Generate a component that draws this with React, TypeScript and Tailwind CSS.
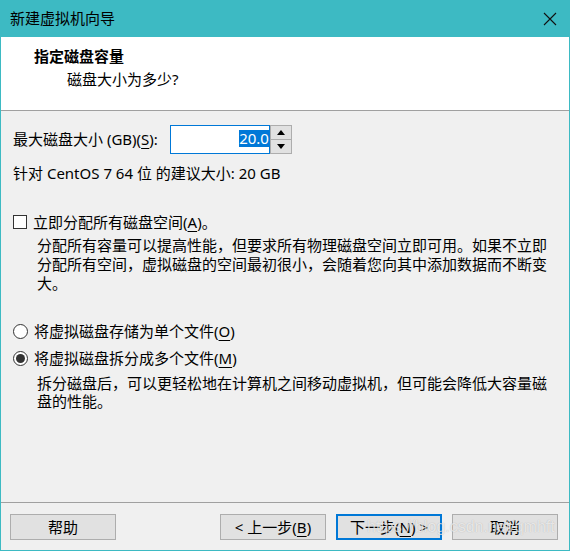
import React from "react";

const Key = ({ k }: { k: string }) => (
  <>
    (<span className="underline underline-offset-[3px] decoration-1">{k}</span>)
  </>
);

const Radio = ({ checked }: { checked?: boolean }) => (
  <span className="w-[15px] h-[15px] rounded-full border border-[#333] bg-white flex items-center justify-center shrink-0">
    {checked && <span className="w-[9px] h-[9px] rounded-full bg-[#333]" />}
  </span>
);

const Btn = ({ children, primary }: { children: React.ReactNode; primary?: boolean }) => (
  <button
    className={
      primary
        ? "w-[106px] h-[26px] bg-[#e1e1e1] border-2 border-[#0078d7] flex items-center justify-center leading-none"
        : "w-[106px] h-[26px] bg-[#e1e1e1] border border-[#adadad] flex items-center justify-center leading-none"
    }
  >
    {children}
  </button>
);

export default function App() {
  return (
    <div className="w-[570px] h-[551px] flex flex-col bg-[#f0f0f0] border-x border-b border-[#3dbac3] text-[15px] text-black font-['Noto_Sans','Noto_Sans_CJK_SC',sans-serif] relative overflow-hidden">
      {/* title bar */}
      <div className="h-[37px] -mx-px bg-[#3dbac3] flex items-center justify-between pl-[10px] pr-[13px] shrink-0">
        <span className="leading-none">新建虚拟机向导</span>
        <svg width="14" height="14" viewBox="0 0 14 14">
          <path d="M1 1L13 13M13 1L1 13" stroke="#111" strokeWidth="1.1" />
        </svg>
      </div>

      {/* header */}
      <div className="h-[74px] bg-white border-b border-[#a0a0a0] pl-[33px] pt-[9px] shrink-0">
        <div className="font-bold leading-[20px]">指定磁盘容量</div>
        <div className="leading-[20px] mt-[3px] ml-[33px]">磁盘大小为多少?</div>
      </div>

      {/* content */}
      <div className="flex-1 pl-[12px] pr-[20px]">
        <div className="mt-[14px] flex items-center h-[29px]">
          <span>
            最大磁盘大小 (GB)<Key k="S" />:
          </span>
          <div className="ml-[12px] flex h-[29px]">
            <div className="w-[100px] border border-[#0078d7] bg-white flex items-center justify-end">
              <span className="bg-[#0078d7] text-white leading-[17px] -mt-[3px]">20.0</span>
            </div>
            <div className="w-[22px] flex flex-col border border-[#adadad] bg-[#e1e1e1]">
              <div className="flex-1 flex items-center justify-center border-b border-[#adadad]">
                <svg width="8" height="5" viewBox="0 0 8 5">
                  <path d="M0 5L4 0L8 5Z" fill="#000" />
                </svg>
              </div>
              <div className="flex-1 flex items-center justify-center">
                <svg width="8" height="5" viewBox="0 0 8 5">
                  <path d="M0 0L4 5L8 0Z" fill="#000" />
                </svg>
              </div>
            </div>
          </div>
        </div>

        <div className="mt-[9px] leading-[20px]">针对 CentOS 7 64 位 的建议大小: 20 GB</div>

        <div className="mt-[29px] flex items-center gap-[6px] leading-[20px]">
          <span className="w-[14px] h-[14px] border border-[#333] bg-white shrink-0" />
          <span>
            立即分配所有磁盘空间<Key k="A" />。
          </span>
        </div>
        <p className="ml-[24px] w-[515px] mt-[4px] leading-[19px]">
          分配所有容量可以提高性能，但要求所有物理磁盘空间立即可用。如果不立即分配所有空间，虚拟磁盘的空间最初很小，会随着您向其中添加数据而不断变大。
        </p>

        <div className="mt-[28px] flex items-center gap-[6px] leading-[20px]">
          <Radio />
          <span>
            将虚拟磁盘存储为单个文件<Key k="O" />
          </span>
        </div>
        <div className="mt-[7px] flex items-center gap-[6px] leading-[20px]">
          <Radio checked />
          <span>
            将虚拟磁盘拆分成多个文件<Key k="M" />
          </span>
        </div>
        <p className="ml-[24px] w-[515px] mt-[6px] leading-[18px]">
          拆分磁盘后，可以更轻松地在计算机之间移动虚拟机，但可能会降低大容量磁盘的性能。
        </p>
      </div>

      {/* footer */}
      <div className="border-t border-[#a0a0a0] pt-[11px] pb-[10px] pl-[9px] pr-[11px] flex items-center shrink-0">
        <Btn>帮助</Btn>
        <div className="flex-1" />
        <div className="flex gap-[10px]">
          <Btn>
            &lt; 上一步<Key k="B" />
          </Btn>
          <Btn primary>
            下一步<Key k="N" /> &gt;
          </Btn>
          <Btn>取消</Btn>
        </div>
      </div>

      <span className="absolute left-[366px] top-[519px] text-[16px] leading-none text-white/70 font-['Liberation_Sans',sans-serif] pointer-events-none [text-shadow:0_0_1px_rgba(0,0,0,0.25)]">
        https://blog.csdn.net/qmhft
      </span>
    </div>
  );
}
